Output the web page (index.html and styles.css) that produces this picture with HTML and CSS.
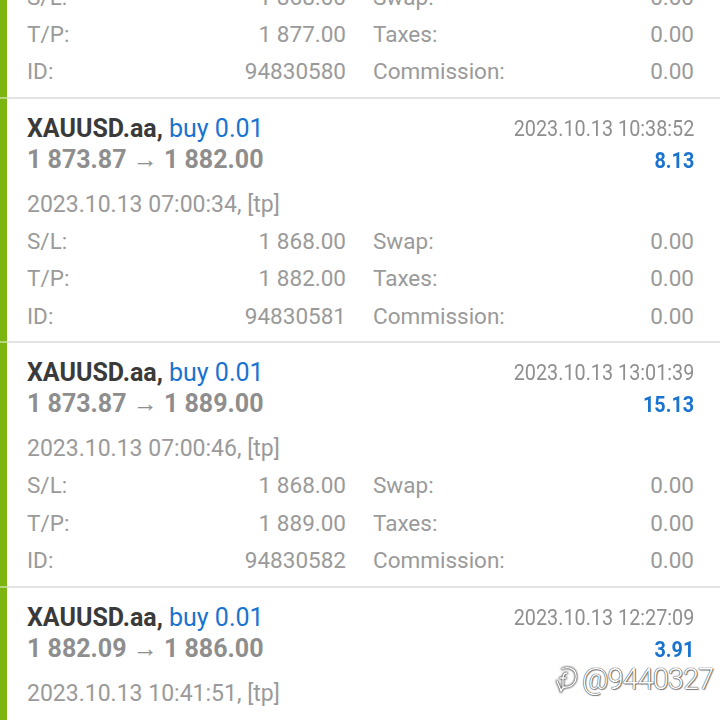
FILE: index.html
```html
<!DOCTYPE html>
<html>
<head>
<meta charset="utf-8">
<link rel="stylesheet" href="styles.css">
</head>
<body>
<div class="list">
  <div class="card">
    <div class="sep"></div>
    <div class="body">
      <div class="head">
        <div class="head-left">
          <div class="title"><span class="sym">XAUUSD.aa,</span> <span class="side">buy 0.01</span></div>
          <div class="price">1 873.87 → 1 877.00</div>
        </div>
        <div class="head-right">
          <div class="close-time"><span>2023.10.13 10:12:47</span></div>
          <div class="profit"><span>3.13</span></div>
        </div>
      </div>
      <div class="open">2023.10.13 07:00:22, [tp]</div>
      <div class="grid">
        <div class="cell"><span>S/L:</span><span>1 868.00</span></div>
        <div class="cell"><span>Swap:</span><span>0.00</span></div>
        <div class="cell"><span>T/P:</span><span>1 877.00</span></div>
        <div class="cell"><span>Taxes:</span><span>0.00</span></div>
        <div class="cell"><span>ID:</span><span>94830580</span></div>
        <div class="cell"><span>Commission:</span><span>0.00</span></div>
      </div>
    </div>
  </div>

  <div class="card">
    <div class="sep"></div>
    <div class="body">
      <div class="head">
        <div class="head-left">
          <div class="title"><span class="sym">XAUUSD.aa,</span> <span class="side">buy 0.01</span></div>
          <div class="price">1 873.87 → 1 882.00</div>
        </div>
        <div class="head-right">
          <div class="close-time"><span>2023.10.13 10:38:52</span></div>
          <div class="profit"><span>8.13</span></div>
        </div>
      </div>
      <div class="open">2023.10.13 07:00:34, [tp]</div>
      <div class="grid">
        <div class="cell"><span>S/L:</span><span>1 868.00</span></div>
        <div class="cell"><span>Swap:</span><span>0.00</span></div>
        <div class="cell"><span>T/P:</span><span>1 882.00</span></div>
        <div class="cell"><span>Taxes:</span><span>0.00</span></div>
        <div class="cell"><span>ID:</span><span>94830581</span></div>
        <div class="cell"><span>Commission:</span><span>0.00</span></div>
      </div>
    </div>
  </div>

  <div class="card">
    <div class="sep"></div>
    <div class="body">
      <div class="head">
        <div class="head-left">
          <div class="title"><span class="sym">XAUUSD.aa,</span> <span class="side">buy 0.01</span></div>
          <div class="price">1 873.87 → 1 889.00</div>
        </div>
        <div class="head-right">
          <div class="close-time"><span>2023.10.13 13:01:39</span></div>
          <div class="profit"><span>15.13</span></div>
        </div>
      </div>
      <div class="open">2023.10.13 07:00:46, [tp]</div>
      <div class="grid">
        <div class="cell"><span>S/L:</span><span>1 868.00</span></div>
        <div class="cell"><span>Swap:</span><span>0.00</span></div>
        <div class="cell"><span>T/P:</span><span>1 889.00</span></div>
        <div class="cell"><span>Taxes:</span><span>0.00</span></div>
        <div class="cell"><span>ID:</span><span>94830582</span></div>
        <div class="cell"><span>Commission:</span><span>0.00</span></div>
      </div>
    </div>
  </div>

  <div class="card">
    <div class="sep"></div>
    <div class="body">
      <div class="head">
        <div class="head-left">
          <div class="title"><span class="sym">XAUUSD.aa,</span> <span class="side">buy 0.01</span></div>
          <div class="price">1 882.09 → 1 886.00</div>
        </div>
        <div class="head-right">
          <div class="close-time"><span>2023.10.13 12:27:09</span></div>
          <div class="profit"><span>3.91</span></div>
        </div>
      </div>
      <div class="open">2023.10.13 10:41:51, [tp]</div>
      <div class="grid">
        <div class="cell"><span>S/L:</span><span>1 877.00</span></div>
        <div class="cell"><span>Swap:</span><span>0.00</span></div>
        <div class="cell"><span>T/P:</span><span>1 886.00</span></div>
        <div class="cell"><span>Taxes:</span><span>0.00</span></div>
        <div class="cell"><span>ID:</span><span>94830590</span></div>
        <div class="cell"><span>Commission:</span><span>0.00</span></div>
      </div>
    </div>
  </div>
</div>

<div class="watermark">
  <svg class="wm-logo" width="26" height="28" viewBox="0 0 26 28">
    <path d="M9 4 C14 1 22 3 23 10 C24 17 19 22 13 22 C11 22 9 23 8 26 C7 22 5 19 4 16" fill="none" stroke="#fff" stroke-width="1.4" stroke-linecap="round"/>
    <path d="M14 8 C11 8 10 10 10 13 L10 22 M7 13 L13 13" fill="none" stroke="#fff" stroke-width="1.4" stroke-linecap="round"/>
  </svg>
  <span class="wm-text">@9440327</span>
</div>
</body>
</html>
```

FILE: styles.css
```css
html, body {
  margin: 0;
  padding: 0;
  background: #ffffff;
  overflow: hidden;
  height: 720px;
}

body {
  font-family: Roboto, "Noto Sans", sans-serif;
  color: #999999;
}

.list {
  margin-top: -147.33px;
}

.card {
  display: flex;
  flex-direction: column;
}

.sep {
  height: 2px;
  background: linear-gradient(to right, #b7d77e 7px, #e3e3e3 7px);
}

.body {
  border-left: 7px solid #7cb50f;
  padding: 14px 26px 6.33px 20px;
}

.head {
  display: flex;
  justify-content: space-between;
  align-items: flex-start;
  height: 63px;
}

.head-left,
.head-right {
  display: flex;
  flex-direction: column;
}

.head-right {
  align-items: flex-end;
}

.title {
  font-size: 25px;
  line-height: 31px;
  white-space: nowrap;
}

.sym {
  font-weight: 700;
  color: #3a3a3a;
}

.side {
  color: #1a73cf;
}

.price {
  font-size: 25px;
  line-height: 32px;
  font-weight: 700;
  color: #8e8e8e;
  white-space: nowrap;
}

.close-time,
.profit {
  font-size: 22.5px;
  white-space: nowrap;
}

.close-time {
  line-height: 31px;
  color: #8f8f8f;
}

.profit {
  line-height: 32px;
  font-weight: 700;
  color: #1a73cf;
}

.close-time span,
.profit span {
  display: inline-block;
  transform: scaleX(0.88);
  transform-origin: right center;
}

.open {
  margin-top: 10px;
  font-size: 23px;
  line-height: 37px;
  color: #9a9a9a;
  white-space: nowrap;
}

.grid {
  display: grid;
  grid-template-columns: 319fr 321fr;
  column-gap: 27px;
}

.cell {
  display: flex;
  justify-content: space-between;
  font-size: 22.5px;
  line-height: 37.33px;
  color: #9a9a9a;
  white-space: nowrap;
}

.watermark {
  position: absolute;
  left: 553px;
  top: 662px;
  display: flex;
  align-items: center;
  gap: 3px;
}

.wm-logo {
  filter: drop-shadow(0 0 1px #444) drop-shadow(0 0 0.5px #444);
}

.wm-text {
  font-family: Roboto, sans-serif;
  font-weight: 300;
  font-size: 29px;
  line-height: 34px;
  letter-spacing: -1px;
  color: #ffffff;
  text-shadow: 0 0 1px #333, 0 0 1px #333, 1px 1px 1px rgba(0,0,0,0.45);
}
```
